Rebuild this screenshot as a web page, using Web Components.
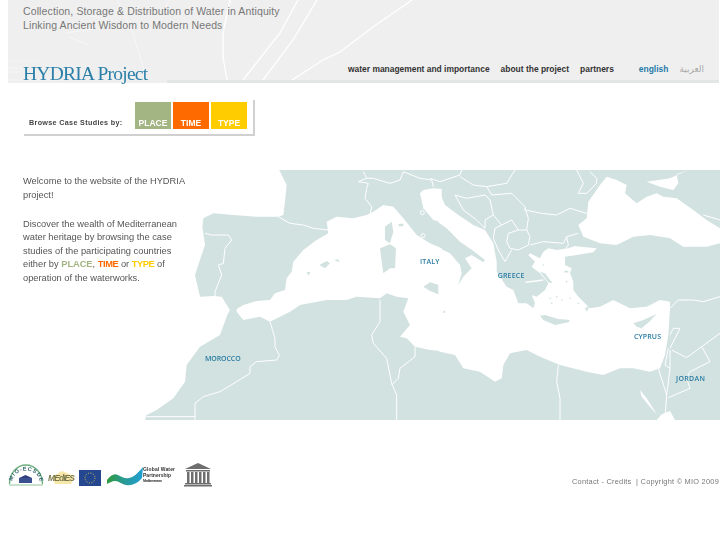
<!DOCTYPE html>
<html lang="en">
<head>
<meta charset="UTF-8">
<title>HYDRIA Project</title>
<style>
  html, body { margin: 0; background: #fff; }
  body { font-family: "Liberation Sans", Arial, sans-serif; color: #555; overflow: hidden; }
  .place { color: #a3b582; font-weight: bold; letter-spacing: -.05px; }
  .time { color: #ff6a00; font-weight: bold; letter-spacing: -.4px; }
  .type { color: #ffcc00; font-weight: bold; letter-spacing: -.4px; }
</style>
</head>
<body>
<hydria-header>
  <span slot="line">Collection, Storage &amp; Distribution of Water in Antiquity</span>
  <span slot="line">Linking Ancient Wisdom to Modern Needs</span>
  <span slot="logo">HYDRIA Project</span>
</hydria-header>
<hydria-browse></hydria-browse>
<hydria-main>
  <p>Welcome to the website of the HYDRIA<br>project!</p>
  <p>Discover the wealth of Mediterranean<br>water heritage by browsing the case<br>studies of the participating countries<br>either by <span class="place">PLACE</span>, <span class="time">TIME</span> or <span class="type">TYPE</span> of<br>operation of the waterworks.</p>
</hydria-main>
<hydria-footer></hydria-footer>

<script>
(function () {
    let headerTmpl = document.createElement('template');
    headerTmpl.innerHTML = `
      <style>
        :host { display: block; position: relative; margin-left: 8px; width: 711px; height: 83px; background: #efefef; filter: blur(.25px); }
        svg { position: absolute; left: 0; top: 0; }
        .inner { position: relative; height: 83px; display: flex; flex-direction: column; }
        .lines { display: flex; flex-direction: column; padding: 4px 0 0 15px; font-size: 10.5px; line-height: 14px; letter-spacing: .12px; color: #777; }
        .bottom { margin-top: auto; display: flex; align-items: flex-end; height: 28px; }
        .logo { width: 159px; box-sizing: border-box; padding: 0 0 1px 15px; font: 19.5px/24px "Liberation Serif", "Times New Roman", serif; letter-spacing: -.75px; color: #2b7fa9; white-space: nowrap; position: relative; top: 4px; }
        .rest { flex: 1; height: 28px; display: flex; flex-direction: column; }
        nav { flex: 1; display: flex; align-items: center; padding: 2px 0 0 181px; font-size: 8.45px; font-weight: bold; color: #333; white-space: nowrap; gap: 11px; }
        .en { margin-left: 14px; color: #1f7aa8; }
        .ar { font: 9px "DejaVu Sans", sans-serif; color: #aaa; }
        .bar { height: 3px; background: #e2e7e6; }
      </style>
      <svg width="711" height="83" viewBox="8 0 711 83" fill="none" stroke="#fff">
        <path d="M230 0 223 33 223 57 227 80M298 0 280 33 243 80M317 0 293 40 263 80M412 0 373 27 340 52 323 60 292 80" stroke-width="1.3"/>
        <path d="M117 0 133 33 143 67 147 80M170 0 163 10M8 61H40M8 68H24M8 80H60M65 33 100 28M70 37 88 45M75 12 100 18M8 72H20" stroke-width=".8" opacity=".6"/>
      </svg>
      <div class="inner">
        <div class="lines"><slot name="line"></slot></div>
        <div class="bottom">
          <div class="logo"><slot name="logo"></slot></div>
          <div class="rest">
            <nav>
              <span>water management and importance</span>
              <span>about the project</span>
              <span>partners</span>
              <span class="en">english</span>
              <span class="ar" lang="ar" dir="rtl">العربية</span>
            </nav>
            <div class="bar"></div>
          </div>
        </div>
      </div>`;

    class HydriaHeader extends HTMLElement {
        constructor() {
            super();
            this.attachShadow({ mode: "open" }).appendChild(headerTmpl.content.cloneNode(true));
        }
    }

    let browseTmpl = document.createElement('template');
    browseTmpl.innerHTML = `
      <style>
        :host { display: flex; align-items: stretch; margin: 17px 0 0 24px; width: 231px; height: 36px; box-sizing: border-box; padding: 2px 6px 5px 5px; border-right: 2px solid #d0d0d0; border-bottom: 2px solid #d0d0d0; filter: blur(.25px); }
        .label { width: 106px; align-self: flex-end; font-size: 7.2px; font-weight: bold; letter-spacing: .33px; color: #444; white-space: nowrap; padding-bottom: 2px; }
        .tiles { display: flex; gap: 2px; height: 27px; }
        .tile { width: 36px; display: flex; align-items: flex-end; justify-content: center; font-size: 8.5px; font-weight: bold; color: #fff; padding-bottom: 1px; box-sizing: border-box; }
        .place { background: #a3b582; }
        .time { background: #ff6a00; }
        .type { background: #ffcc00; }
      </style>
      <div class="label">Browse Case Studies by:</div>
      <div class="tiles">
        <div class="tile place">PLACE</div>
        <div class="tile time">TIME</div>
        <div class="tile type">TYPE</div>
      </div>`;

    class HydriaBrowse extends HTMLElement {
        constructor() {
            super();
            this.attachShadow({ mode: "open" }).appendChild(browseTmpl.content.cloneNode(true));
        }
    }

    // map is traced in crop units: 3 units = 1px, second group is shifted 870 units
    let mapTmpl = document.createElement('template');
    mapTmpl.innerHTML = `
      <style>
        :host { display: block; width: 580px; height: 260px; filter: blur(.3px); }
        svg { display: block; }
        text { font: 600 21px "Open Sans", "DejaVu Sans", sans-serif; fill: #2a7ca3; }
        .sea { fill: #fff; }
        .land { fill: #d2e2e0; }
        .dots { fill: none; stroke: #d2e2e0; stroke-width: 5; stroke-linecap: round; }
        .b { fill: none; stroke: #fff; stroke-width: 3; stroke-linejoin: round; }
      </style>
      <svg width="580" height="260" viewBox="0 0 1740 780">
        <rect class="land" x="0" y="15" width="1740" height="750"/>
        <path class="sea" d="M0 0H410L440 60 436 100 430 150 415 155 350 155 280 150 220 145 190 160 187 185 195 240 178 290 165 330 180 395 220 393 245 395 270 435 262 450 240 510 180 545 140 600 135 650 100 700 50 735 20 750 15 765H0Z"/>
        <path class="sea" d="M290 432 310 420 350 408 390 405 405 385 435 375 440 340 455 320 460 290 490 255 530 225 565 205 560 170 590 155 640 160 680 150 700 140 730 120 760 125 790 160 830 210 870 235 905 250V558L870 555 825 545 800 520 780 515 810 480 790 440 805 400 770 395 740 385 720 400 650 395 620 405 560 405 480 420 450 440 390 470 360 455 310 465 290 440Z"/>
        <path class="sea" d="M905 172 880 165 850 130 840 85 850 75 880 70 905 72Z"/>
        <g class="b">
          <path d="M415 155 450 175 490 180 520 190 565 195"/>
          <path d="M195 205 215 210 265 210 275 225 255 250 250 295 235 300 245 330 235 355 225 380 225 395"/>
          <path d="M655 50 680 40 670 20M655 50 685 55 680 70 675 100 695 125 690 150"/>
          <path d="M680 40 700 40 750 55 780 45 790 20 840 40 875 45 880 65"/>
          <path d="M390 470 405 520 405 545 418 572 410 585 350 590 330 605 330 625 290 650 240 680 190 695 165 715 165 765M20 755H165"/>
          <path d="M720 405 720 470 695 510 700 535 740 580 755 655 770 690 770 765"/>
          <path d="M825 545 825 575 780 610 775 640 755 660"/>
          <circle cx="847" cy="143" r="6"/><circle cx="849" cy="212" r="6"/>
        </g>
        <path class="land" d="M735 185 755 170 760 200 750 235 735 225ZM720 250 750 238 768 250 765 310 750 310 730 325 725 290ZM538 300 560 288 570 295 555 310ZM582 285 595 283 597 292ZM500 322 512 320 505 332ZM850 365 870 352 905 362 950 358 935 405 900 390 870 378ZM776 176H790V184H776Z"/>
        <g transform="translate(870 0)">
          <path class="sea" d="M25 248 60 265 90 300 95 325 85 360 100 335 125 310 105 280 125 270 160 292 165 285 130 258 90 230 50 190 25 172V72L30 85 45 120 85 150 130 180 165 195 190 235 200 290 200 320 230 365 250 375 265 415 290 415 310 430 315 415 305 390 320 395 345 375 350 365 355 355 330 325 305 305 315 290 295 270 300 265 330 280 340 260 355 250 380 255 415 250 435 243 450 245 500 250 490 262 440 270 405 275 405 300 425 310 420 325 430 350 430 375 445 395 465 415 480 430 510 425 550 405 600 430 650 425 690 405 720 410 720 430 715 510 705 570 690 610 660 620 610 610 570 610 520 630 470 620 390 600 330 575 290 555 240 565 220 600 215 640 195 650 150 620 100 610 75 570 30 560 25 558Z"/>
          <path class="sea" d="M445 180 470 160 475 110 510 60 530 35 560 45 590 60 585 85 620 115 650 95 680 85 700 95 740 100 790 135 830 165 870 190V235L830 245 760 245 720 220 660 210 610 215 560 240 510 235 460 215Z"/>
          <path class="sea" d="M650 50 720 40 775 15 740 28 745 55 730 75 690 65Z"/>
          <path class="sea" d="M630 675 650 700 680 748 660 725 635 695ZM695 748 720 738 735 765H680Z"/>
          <path class="land" d="M330 452 345 450 385 462 420 465 415 472 375 480 340 465ZM610 475 640 465 680 447 660 468 635 490 620 485ZM465 430 480 420 470 440ZM330 320 345 325 368 355 355 352ZM40 437H46V443H40Z"/>
          <path class="dots" d="M360 400h.1M380 395h.1M395 405h.1M365 415h.1M420 400h.1M445 415h.1M405 320h8M410 350h.1M340 300h.1M225 300v6M245 370h.1"/>
          <path class="sea" d="M285 350 340 343 340 347 287 354Z"/>
          <g class="b">
            <path d="M0 40 30 50 90 30 95 15M90 35 130 60 170 65 230 55 255 15M170 65 185 90 245 85 285 125 285 135 335 145 380 150 420 130 470 145"/>
            <path d="M285 130 295 160 290 195M75 90 110 100 165 90 180 105 190 150 165 165 165 190M75 90 100 135 140 165 165 190"/>
            <path d="M190 150 215 180 245 165 265 195 290 195 300 215 295 240 265 255 240 250 230 230 235 205 265 195M215 180 195 190 190 220 205 255 225 290 245 255"/>
            <path d="M300 240 340 230 400 235 410 215 445 205M410 215 415 240 400 260"/>
            <path d="M440 15 460 55 445 85 470 85 500 55 500 40 480 20M820 150 870 165"/>
            <path d="M720 430 745 405 790 405 820 410 870 395M720 510 730 490 750 490 735 520 720 550"/>
            <path d="M725 555 770 578 815 545 870 505M815 545 840 590 780 620 770 640 780 670 715 698"/>
            <path d="M715 550 705 600 720 610 720 555M720 610 710 690 705 760M685 610 710 690M385 600 380 650 390 700 390 765"/>
          </g>
          <text x="203" y="339" textLength="80">GREECE</text>
          <text x="612" y="521" textLength="81">CYPRUS</text>
          <text x="738" y="648" textLength="87">JORDAN</text>
        </g>
        <text x="840" y="298" textLength="58">ITALY</text>
        <text x="195" y="589" textLength="107">MOROCCO</text>
      </svg>`;

    class HydriaMap extends HTMLElement {
        constructor() {
            super();
            this.attachShadow({ mode: "open" }).appendChild(mapTmpl.content.cloneNode(true));
        }
    }

    let mainTmpl = document.createElement('template');
    mainTmpl.innerHTML = `
      <style>
        :host { display: grid; grid-template-columns: 23px 117px 580px; margin-top: 29px; height: 262px; }
        hydria-map { grid-area: 1 / 3; }
        .intro { grid-area: 1 / 2 / 1 / 4; z-index: 1; width: 165px; padding-top: 10px; font-size: 9.3px; line-height: 13.6px; color: #555; white-space: nowrap; filter: blur(.25px); }
        ::slotted(p) { margin: 0 0 15.5px; }
      </style>
      <hydria-map></hydria-map>
      <div class="intro"><slot></slot></div>`;

    class HydriaMain extends HTMLElement {
        constructor() {
            super();
            this.attachShadow({ mode: "open" }).appendChild(mainTmpl.content.cloneNode(true));
        }
    }

    let footerTmpl = document.createElement('template');
    footerTmpl.innerHTML = `
      <style>
        :host { display: flex; align-items: flex-end; justify-content: space-between; width: 719px; margin-top: 36px; height: 25px; padding-left: 8px; box-sizing: border-box; }
        .logos { display: block; filter: blur(.4px); }
        .logos text { font-family: "Liberation Sans", sans-serif; }
        .copy { font-size: 7.4px; letter-spacing: .24px; color: #777; white-space: pre; padding-bottom: 2px; filter: blur(.25px); }
      </style>
      <svg class="logos" width="204" height="25" viewBox="8 463 204 25">
        <defs>
          <linearGradient id="gwp" x1="0" x2="1" y1="0" y2="0">
            <stop offset="0" stop-color="#2f9a3c"/><stop offset=".4" stop-color="#2a9a8a"/><stop offset="1" stop-color="#1f9fd6"/>
          </linearGradient>
        </defs>
        <!-- MIO-ECSDE -->
        <path d="M9.500 484A16.500 19 0 0 1 42.500 484" fill="none" stroke="#6fb07f" stroke-width="1.400"/>
        <path d="M12 483A14 12.500 0 0 1 40 483" fill="none" id="mio"/>
        <text font-size="5.400" font-weight="bold" fill="#2d5f68"><textPath href="#mio" startOffset="2" textLength="38">MIO-ECSDE</textPath></text>
        <path d="M19 478 25.500 475 32 478Z" fill="#2e3f80"/><rect x="19" y="478" width="13" height="5" fill="#3a4f90"/>
        <path d="M9 485H43" stroke="#8fc39a" stroke-width="1.200"/>
        <!-- Medies -->
        <path d="M52 477 62 471 74 476 71 484 55 484Z" fill="#f8e8a8"/>
        <text x="48" y="481" font-size="8.500" font-style="italic" font-weight="bold" fill="#7a7a50" textLength="27">MEdIES</text>
        <!-- EU -->
        <rect x="79" y="470" width="22" height="16" fill="#24478f"/>
        <circle cx="90" cy="478" r="5" fill="none" stroke="#d9c94a" stroke-width="1" stroke-dasharray="1 1.600"/>
        <!-- GWP -->
        <path d="M107 480C111 475 114 473 118 475 122 477 125 479 129 478 134 477 138 473 143 467L142 478C138 483 132 486 126 485 121 484 119 481 115 481 112 481 109 483 107 484Z" fill="url(#gwp)"/>
        <g fill="#333" font-size="5" font-weight="bold">
          <text x="143" y="471" textLength="32">Global Water</text>
          <text x="143" y="477" textLength="28">Partnership</text>
          <text x="143" y="482" font-size="3.500" textLength="19">Mediterranean</text>
        </g>
        <!-- UNESCO -->
        <g fill="#6e6e6e">
          <path d="M198 463 211 469H185Z"/>
          <rect x="186" y="470" width="24" height="1.500"/>
          <rect x="187" y="472" width="2.500" height="11"/><rect x="191" y="472" width="2.500" height="11"/>
          <rect x="195" y="472" width="2.500" height="11"/><rect x="199" y="472" width="2.500" height="11"/>
          <rect x="203" y="472" width="2.500" height="11"/><rect x="207" y="472" width="2.500" height="11"/>
          <rect x="185" y="483" width="26" height="1.500"/><rect x="184" y="485" width="28" height="1.500"/>
        </g>
      </svg>
      <div class="copy">Contact - Credits  | Copyright © MIO 2009</div>`;

    class HydriaFooter extends HTMLElement {
        constructor() {
            super();
            this.attachShadow({ mode: "open" }).appendChild(footerTmpl.content.cloneNode(true));
        }
    }

    customElements.define('hydria-header', HydriaHeader);
    customElements.define('hydria-browse', HydriaBrowse);
    customElements.define('hydria-map', HydriaMap);
    customElements.define('hydria-main', HydriaMain);
    customElements.define('hydria-footer', HydriaFooter);
})();
</script>
</body>
</html>
